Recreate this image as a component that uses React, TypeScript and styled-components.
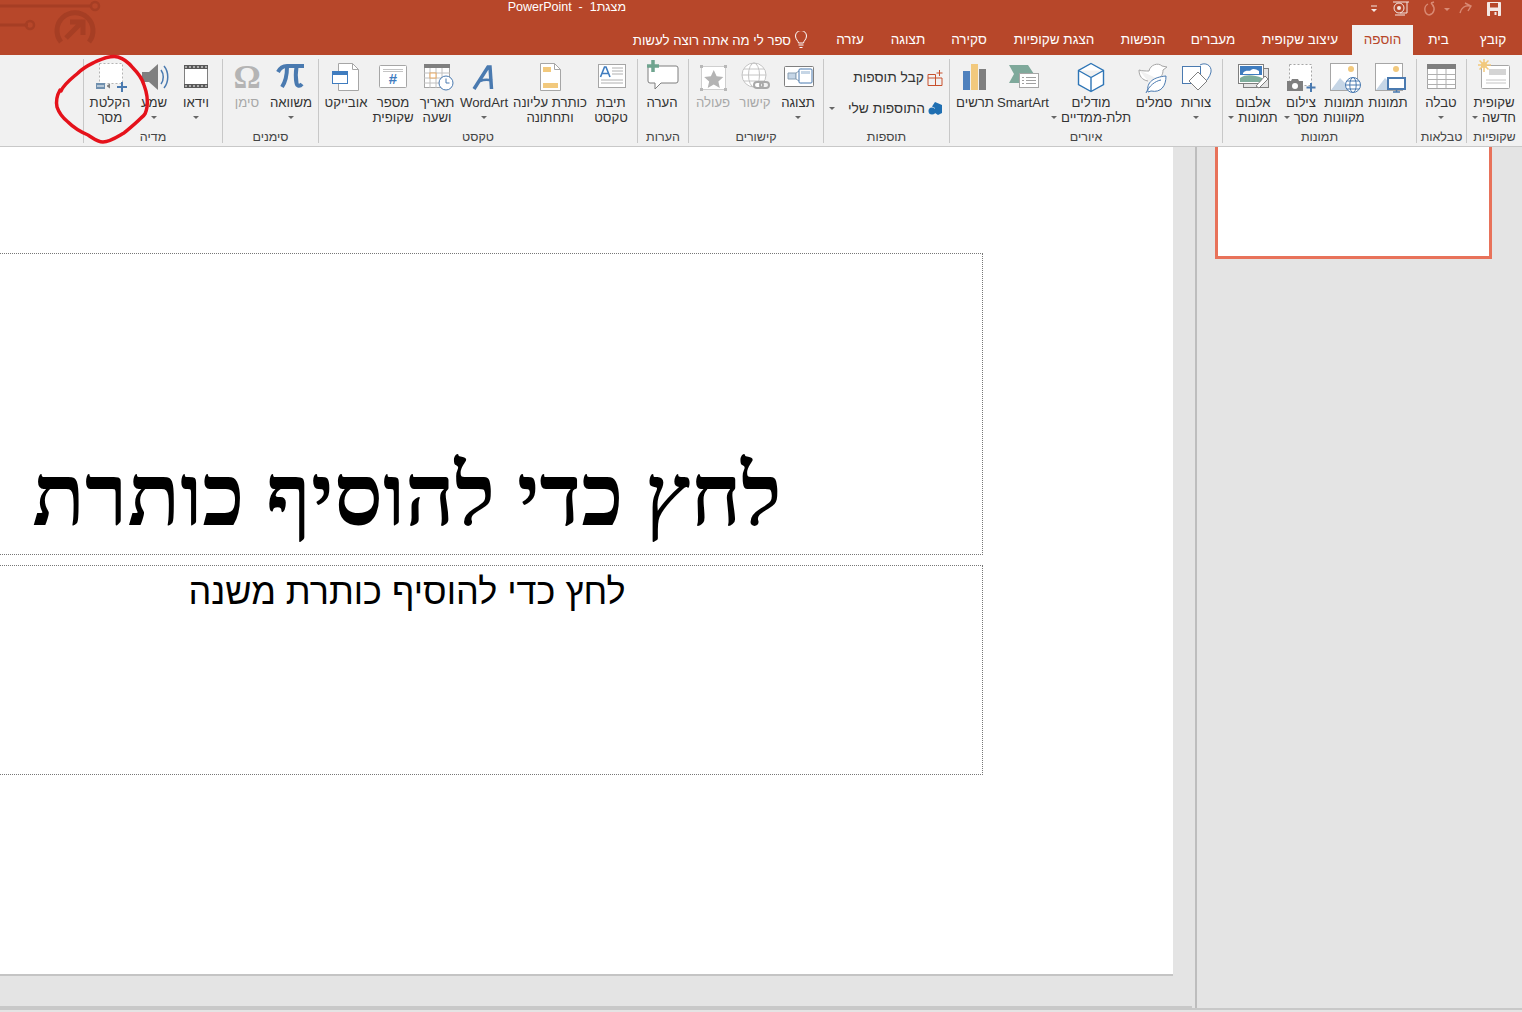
import React from 'react';
import styled, { createGlobalStyle } from 'styled-components';

const GlobalStyle = createGlobalStyle`
  html, body {
    margin: 0;
    padding: 0;
    overflow: hidden;
    background: #e4e4e4;
  }
  #root {
    width: 1522px;
    height: 1012px;
  }
`;

const BLUE = '#4a7ab0';
const GREY = '#a6a6a6';
const DARK = '#7f7f7f';
const YELLOW = '#f2c97d';
const LIGHT = '#c6d6e6';

type IconProps = { children: React.ReactNode };

const Ico = ({ children }: IconProps) => (
  <svg width="36" height="34" viewBox="0 0 36 34" fill="none">
    {children}
  </svg>
);

const NewSlideIcon = () => (
  <Ico>
    <rect x="5.5" y="6.5" width="28" height="23" rx="1" fill="#fff" stroke={GREY} />
    <rect x="13" y="10" width="17" height="6" fill="#d4d4d4" />
    <path d="M10 21h20M10 24h20" stroke="#c4c4c4" />
    <path d="M8 0v13M2 6h13M3.5 1.5l9 9M12.5 1.5l-9 9" stroke={YELLOW} strokeWidth="1.5" />
    <circle cx="8" cy="6" r="3" fill={YELLOW} />
  </Ico>
);

const TableIcon = () => (
  <Ico>
    <rect x="4.5" y="5.5" width="28" height="24" fill="#fff" stroke={GREY} />
    <rect x="4" y="5" width="29" height="5" fill={DARK} />
    <path d="M4 15.5h28M4 20.5h28M4 25.5h28M14 10v19M23 10v19" stroke="#b0b0b0" />
  </Ico>
);

const PicturesIcon = () => (
  <Ico>
    <rect x="5.5" y="4.5" width="27" height="27" fill="#fff" stroke={GREY} />
    <path d="M6 31l9-12 6 6 3-2 8 8z" fill={LIGHT} />
    <circle cx="26" cy="10" r="3" fill={YELLOW} />
    <rect x="18" y="19" width="17" height="11" fill="#fff" stroke={BLUE} strokeWidth="2" />
    <path d="M26.5 30v3M23 33h7" stroke={BLUE} strokeWidth="1.5" />
  </Ico>
);

const OnlinePicturesIcon = () => (
  <Ico>
    <rect x="4.5" y="4.5" width="27" height="27" fill="#fff" stroke={GREY} />
    <path d="M5 31l9-12 6 6 3-2 8 8z" fill={LIGHT} />
    <circle cx="25" cy="10" r="3" fill={YELLOW} />
    <circle cx="27" cy="26" r="7.5" fill="#fff" stroke={BLUE} />
    <ellipse cx="27" cy="26" rx="3.2" ry="7.5" stroke={BLUE} />
    <path d="M19.5 26h15M21 22h12M21 30h12" stroke={BLUE} />
  </Ico>
);

const ScreenshotIcon = () => (
  <Ico>
    <rect x="6.5" y="5.5" width="22" height="21" fill="#fff" stroke={GREY} strokeDasharray="2 2" />
    <path d="M4 22h4l1-2h6l1 2h4v10H4z" fill={DARK} />
    <circle cx="12" cy="27" r="3" fill="#fff" />
    <path d="M28 24v9M23.5 28.5h9" stroke={BLUE} strokeWidth="2" />
  </Ico>
);

const AlbumIcon = () => (
  <Ico>
    <rect x="8.5" y="9.5" width="25" height="19" fill="#e4e4e4" stroke={DARK} />
    <rect x="3.5" y="5.5" width="25" height="19" fill="#fff" stroke={DARK} />
    <rect x="5" y="7" width="22" height="9" fill="#3f7cbf" />
    <path d="M8 14c3-4 6-1 8-3s5-1 8 1v3H8z" fill="#fff" />
    <path d="M5 23v-4c6-4 14-3 22 0v4z" fill="#7fae9c" />
    <path d="M21 27l9-10 3 3-9 9z" fill="#fff" stroke={DARK} />
  </Ico>
);

const ShapesIcon = () => (
  <Ico>
    <path d="M22 6c5-3 12 0 11 7-1 5-5 9-8 13" stroke={BLUE} fill="#fff" />
    <rect x="4.5" y="7.5" width="18" height="17" fill="#fff" stroke={BLUE} />
    <path d="M20 16l9 9-9 9-9-9z" transform="translate(0 -3)" fill="#fff" stroke={DARK} />
  </Ico>
);

const IconsIcon = () => (
  <Ico>
    <path
      d="M3 11c3 1 7 1 10 1 1-6 9-9 13-5l5 1-4 3c0 5-2 7-5 9M3 11c0 6 3 10 9 11"
      stroke={GREY}
      fill="#fff"
    />
    <path d="M12 33c-2-10 6-15 18-16 0 10-5 17-15 15z" fill="#fff" stroke={BLUE} />
    <path d="M10 34c3-7 9-12 15-13" stroke={BLUE} />
  </Ico>
);

const ModelsIcon = () => (
  <Ico>
    <path
      d="M18 4.5l12.5 7v14l-12.5 7-12.5-7v-14zM5.5 11.5L18 18.5l12.5-7M18 18.5v14"
      stroke="#2e75b6"
      strokeWidth="1.4"
      fill="#fff"
    />
  </Ico>
);

const SmartArtIcon = () => (
  <Ico>
    <path d="M4 6h19l6 9-6 9H4l5-9z" fill="#7fa99b" />
    <rect x="14.5" y="14.5" width="19" height="14" fill="#fff" stroke={GREY} />
    <path d="M21 18.5h10M21 21.5h10M21 24.5h10M17 18.5h2M17 21.5h2M17 24.5h2" stroke="#a0a0a0" />
  </Ico>
);

const ChartIcon = () => (
  <Ico>
    <rect x="6" y="12" width="7" height="19" fill="#4f81bd" />
    <rect x="14" y="5" width="7" height="26" fill={YELLOW} />
    <rect x="22" y="10" width="7" height="21" fill={DARK} />
  </Ico>
);

const GetAddinsIcon = () => (
  <svg width="16" height="16" viewBox="0 0 16 16" fill="none">
    <path d="M1 4.500h7.500V8H15v7.500H1zM1 8h7.500v7.500" stroke="#c8502d" />
    <path d="M12.500 0v6M9.500 3h6" stroke="#c8502d" />
  </svg>
);

const MyAddinsIcon = () => (
  <svg width="15" height="15" viewBox="0 0 15 15">
    <path d="M7 1l7 3v8l-4 2-3-2V7L4 5.500z" fill="#1f6fb2" />
    <circle cx="4" cy="10" r="3.500" fill="#1f6fb2" />
  </svg>
);

const DisplayIcon = () => (
  <Ico>
    <rect x="4.500" y="7.500" width="29" height="20" rx="1" fill="#fff" stroke={DARK} />
    <path d="M8 14h8v6H8z" fill={LIGHT} stroke="#8aa0b4" />
    <path d="M16 14l6-4v14l-6-4z" fill="#fff" stroke="#8aa0b4" />
    <rect x="19" y="10" width="13" height="14" rx="1" fill="#fff" stroke={BLUE} />
    <rect x="21" y="12" width="9" height="3" fill={LIGHT} />
  </Ico>
);

const LinkIcon = () => (
  <Ico>
    <circle cx="17" cy="16" r="12" fill="#fff" stroke="#c4c4c4" />
    <ellipse cx="17" cy="16" rx="5.500" ry="12" stroke="#c4c4c4" />
    <path d="M5 16h24M7 10h20M7 22h20" stroke="#c4c4c4" />
    <rect x="17" y="23" width="9" height="6" rx="3" fill="#fff" stroke="#a9a9a9" strokeWidth="2" />
    <rect x="23" y="23" width="9" height="6" rx="3" stroke="#a9a9a9" strokeWidth="2" />
  </Ico>
);

const ActionIcon = () => (
  <Ico>
    <rect x="6.500" y="7.500" width="24" height="23" fill="#fff" stroke="#cfcfcf" />
    <path
      d="M18.500 10.500l3 6.500 7 .7-5.200 4.600 1.500 6.900-6.300-3.600-6.300 3.600 1.500-6.900-5.200-4.600 7-.7z"
      fill="#b4b4b4"
      transform="translate(1 1) scale(.96)"
    />
    <path d="M5 6h3v3H5zM29 6h3v3h-3zM5 29h3v3H5zM29 29h3v3h-3z" fill="#b8b8b8" />
  </Ico>
);

const CommentIcon = () => (
  <Ico>
    <path
      d="M6 7h26a2 2 0 0 1 2 2v13a2 2 0 0 1-2 2H17l-6 6v-6H6a2 2 0 0 1-2-2V9a2 2 0 0 1 2-2z"
      fill="#fff"
      stroke={DARK}
    />
    <path d="M9 1v12M3 7h12" stroke="#6fa48f" strokeWidth="3.500" />
  </Ico>
);

const TextBoxIcon = () => (
  <Ico>
    <rect x="5.500" y="5.500" width="27" height="23" fill="#fff" stroke={GREY} />
    <path d="M7.500 18l4-10h1.500l4 10M9 14.500h6" stroke="#3f7cbf" strokeWidth="1.600" />
    <path d="M19 9h11M19 12h11M19 15h11M8 21h22M8 24h22" stroke="#b0b0b0" />
  </Ico>
);

const HeaderFooterIcon = () => (
  <Ico>
    <path d="M8.500 4.500h14l6 6v21h-20z" fill="#fff" stroke={GREY} />
    <path d="M22.500 4.500v6h6" stroke={GREY} />
    <rect x="11" y="8" width="8" height="5" fill={YELLOW} />
    <rect x="11" y="24" width="15" height="5" fill={YELLOW} />
  </Ico>
);

const WordArtIcon = () => (
  <Ico>
    <path d="M8 30L22 8h2l1.500 22" stroke={BLUE} strokeWidth="3.500" />
    <path d="M14 22c4-1.500 8-1.500 12-.5" stroke={BLUE} strokeWidth="2.500" />
  </Ico>
);

const DateIcon = () => (
  <Ico>
    <rect x="5.500" y="5.500" width="25" height="23" fill="#fff" stroke={GREY} />
    <rect x="5" y="5" width="26" height="4" fill={DARK} />
    <path d="M5 14h26M5 19h26M5 24h26M11 9v20M17 9v20M23 9v20" stroke="#c0c0c0" />
    <rect x="11" y="14" width="6" height="5" fill="#fff" stroke="#e8a860" />
    <circle cx="27" cy="24" r="7" fill="#fff" stroke={BLUE} />
    <path d="M27 19.500V24h3.500" stroke={BLUE} />
  </Ico>
);

const HashText = styled.text`
  font-family: 'Liberation Sans', sans-serif;
  font-size: 15px;
  font-weight: 700;
  fill: #3f7cbf;
`;

const NumberIcon = () => (
  <Ico>
    <rect x="4.500" y="6.500" width="27" height="22" rx="1" fill="#fff" stroke={GREY} />
    <path d="M8 10.500h20M8 12.500h20" stroke="#c4c4c4" />
    <HashText x="18" y="25" textAnchor="middle">#</HashText>
  </Ico>
);

const ObjectIcon = () => (
  <Ico>
    <path d="M10.500 4.500h14l6 6v21h-20z" fill="#fff" stroke={GREY} />
    <path d="M24.500 4.500v6h6" stroke={GREY} />
    <rect x="4.500" y="12.500" width="15" height="12" fill="#fff" stroke="#3f7cbf" />
    <rect x="4" y="12" width="16" height="4" fill="#3f7cbf" />
  </Ico>
);

const OmegaGlyph = styled.span`
  display: block;
  height: 34px;
  font-family: 'Liberation Serif', serif;
  font-size: 34px;
  font-weight: 700;
  line-height: 36px;
  color: #b4b4b4;
`;

const EquationIcon = () => (
  <Ico>
    <path d="M5 13c2-4 5-6 9-6h17" stroke={BLUE} strokeWidth="4" />
    <path d="M14 8c0 8-1 14-5 20" stroke={BLUE} strokeWidth="4" />
    <path d="M23.500 8c-1 6-1 11 0 16 .5 3 3 4 5.500 1" stroke={BLUE} strokeWidth="4" />
  </Ico>
);

const SymbolIcon = () => <OmegaGlyph>Ω</OmegaGlyph>;

const VideoIcon = () => (
  <Ico>
    <rect x="6.500" y="6.500" width="23" height="22" fill="#fff" stroke={DARK} />
    <rect x="6" y="6" width="24" height="4" fill="#595959" />
    <rect x="6" y="25" width="24" height="4" fill="#595959" />
    <path d="M7 8h22M7 27h22" stroke="#fff" strokeDasharray="2 2" />
  </Ico>
);

const AudioIcon = () => (
  <Ico>
    <path d="M6 13h7l9-8v26l-9-8H6z" fill={DARK} />
    <path d="M25 11c3 4 3 10 0 14M28 7c5 6 5 16 0 22" stroke={BLUE} strokeWidth="1.500" />
  </Ico>
);

const RecordIcon = () => (
  <Ico>
    <rect x="7.500" y="4.500" width="23" height="20" fill="#fff" stroke="#b4b4b4" strokeDasharray="2 2" />
    <path d="M4 24h9v6H4z" fill="#6f8fae" />
    <path d="M5 27h7" stroke="#fff" />
    <path d="M15 26.500l3-2v5l-3-2z" fill={DARK} />
    <path d="M25 28h10M30 23v10" stroke={BLUE} strokeWidth="2" />
  </Ico>
);

type Item = {
  label: string[];
  width: number;
  icon: React.ReactNode;
  drop?: 'below' | 'inline';
  off?: boolean;
};

type Group = {
  title: string;
  width: number;
  inset: number;
  items?: Item[];
};

const groups: Group[] = [
  {
    title: 'שקופיות',
    width: 56,
    inset: 0,
    items: [{ label: ['שקופית', 'חדשה'], width: 56, icon: <NewSlideIcon />, drop: 'inline' }],
  },
  {
    title: 'טבלאות',
    width: 50,
    inset: 0,
    items: [{ label: ['טבלה'], width: 50, icon: <TableIcon />, drop: 'below' }],
  },
  {
    title: 'תמונות',
    width: 194,
    inset: 6,
    items: [
      { label: ['תמונות'], width: 44, icon: <PicturesIcon /> },
      { label: ['תמונות', 'מקוונות'], width: 44, icon: <OnlinePicturesIcon /> },
      { label: ['צילום', 'מסך'], width: 42, icon: <ScreenshotIcon />, drop: 'inline' },
      { label: ['אלבום', 'תמונות'], width: 54, icon: <AlbumIcon />, drop: 'inline' },
    ],
  },
  {
    title: 'איורים',
    width: 273,
    inset: 6,
    items: [
      { label: ['צורות'], width: 40, icon: <ShapesIcon />, drop: 'below' },
      { label: ['סמלים'], width: 44, icon: <IconsIcon /> },
      { label: ['מודלים', 'תלת-ממדיים'], width: 82, icon: <ModelsIcon />, drop: 'inline' },
      { label: ['SmartArt'], width: 54, icon: <SmartArtIcon /> },
      { label: ['תרשים'], width: 42, icon: <ChartIcon /> },
    ],
  },
  { title: 'תוספות', width: 126, inset: 6 },
  {
    title: 'קישורים',
    width: 135,
    inset: 3,
    items: [
      { label: ['תצוגה'], width: 44, icon: <DisplayIcon />, drop: 'below' },
      { label: ['קישור'], width: 42, icon: <LinkIcon />, off: true },
      { label: ['פעולה'], width: 42, icon: <ActionIcon />, off: true },
    ],
  },
  {
    title: 'הערות',
    width: 51,
    inset: 4,
    items: [{ label: ['הערה'], width: 44, icon: <CommentIcon /> }],
  },
  {
    title: 'טקסט',
    width: 319,
    inset: 5,
    items: [
      { label: ['תיבת', 'טקסט'], width: 42, icon: <TextBoxIcon /> },
      { label: ['כותרת עליונה', 'ותחתונה'], width: 80, icon: <HeaderFooterIcon /> },
      { label: ['WordArt'], width: 52, icon: <WordArtIcon />, drop: 'below' },
      { label: ['תאריך', 'ושעה'], width: 42, icon: <DateIcon /> },
      { label: ['מספר', 'שקופית'], width: 46, icon: <NumberIcon /> },
      { label: ['אובייקט'], width: 48, icon: <ObjectIcon /> },
    ],
  },
  {
    title: 'סימנים',
    width: 96,
    inset: 4,
    items: [
      { label: ['משוואה'], width: 46, icon: <EquationIcon />, drop: 'below' },
      { label: ['סימן'], width: 42, icon: <SymbolIcon />, off: true },
    ],
  },
  {
    title: 'מדיה',
    width: 139,
    inset: 4,
    items: [
      { label: ['וידאו'], width: 44, icon: <VideoIcon />, drop: 'below' },
      { label: ['שמע'], width: 40, icon: <AudioIcon />, drop: 'below' },
      { label: ['הקלטת', 'מסך'], width: 48, icon: <RecordIcon /> },
    ],
  },
];

const tabs: { name: string; width: number; active?: boolean }[] = [
  { name: 'קובץ', width: 58 },
  { name: 'בית', width: 51 },
  { name: 'הוספה', width: 61, active: true },
  { name: 'עיצוב שקופית', width: 104 },
  { name: 'מעברים', width: 70 },
  { name: 'הנפשות', width: 70 },
  { name: 'הצגת שקופיות', width: 108 },
  { name: 'סקירה', width: 62 },
  { name: 'תצוגה', width: 60 },
  { name: 'עזרה', width: 56 },
];

export default function App() {
  return (
    <Page dir="rtl">
      <GlobalStyle />
      <Header>
        <Watermark width="110" height="55" viewBox="0 0 110 55" fill="none">
          <path d="M0 6h92M0 25h28" stroke="#a63e24" strokeWidth="3" />
          <circle cx="95" cy="6" r="4" stroke="#a63e24" strokeWidth="2.500" />
          <circle cx="30" cy="25" r="4" stroke="#a63e24" strokeWidth="2.500" />
          <path d="M61 42a18 18 0 1 1 28 0" stroke="#a63e24" strokeWidth="5" />
          <path d="M66 38l17-17M70 22h13v13" stroke="#a63e24" strokeWidth="5" />
        </Watermark>
        <TitleRow>
          <QuickAccess>
            <svg width="16" height="16" viewBox="0 0 16 16" fill="none">
              <path d="M1.500 1.500h13v13h-13z" fill="#f4e8e4" stroke="#f4e8e4" />
              <rect x="4" y="2" width="8" height="4.500" fill="#b7472a" />
              <rect x="4" y="10" width="8" height="5" fill="#b7472a" />
              <rect x="8.500" y="11" width="2" height="3" fill="#f4e8e4" />
            </svg>
            <FadedGlyphs width="52" height="16" viewBox="0 0 52 16" fill="none">
              <path d="M7 14a6 6 0 0 1-1-11M9 2l2.500 3M9 2l3-1" stroke="#d98a74" strokeWidth="1.400" />
              <path d="M7 14a6 6 0 0 0 3.500-10" stroke="#d98a74" strokeWidth="1.400" />
              <path d="M22 7l3 3 3-3z" fill="#d98a74" />
              <path d="M38 12c1-5 5-8 10-7M43 2l6 3-3 5" stroke="#d98a74" strokeWidth="1.400" />
            </FadedGlyphs>
            <svg width="18" height="18" viewBox="0 0 18 18" fill="none">
              <path d="M1 2h16M15 2v11H8" stroke="#f4e8e4" />
              <circle cx="7" cy="8" r="5" stroke="#f4e8e4" />
              <circle cx="7" cy="8" r="2" fill="#f4e8e4" />
              <path d="M3 15h10" stroke="#f4e8e4" />
            </svg>
            <QatCaret width="8" height="10" viewBox="0 0 8 10">
              <path d="M1 2h6" stroke="#f4e8e4" />
              <path d="M1 5h6L4 8z" fill="#f4e8e4" />
            </QatCaret>
          </QuickAccess>
          <DocTitle>מצגת1&nbsp; -&nbsp; PowerPoint</DocTitle>
        </TitleRow>
        <TabRow>
          {tabs.map((t) => (
            <Tab key={t.name} $width={t.width} $active={t.active}>
              {t.name}
            </Tab>
          ))}
          <TellMe>
            <svg width="14" height="18" viewBox="0 0 14 18" fill="none">
              <path d="M4.500 12c0-2-3-3.500-3-7a5.500 5.500 0 0 1 11 0c0 3.500-3 5-3 7z" stroke="#fff" />
              <path d="M4.500 14h5M5.500 16.500h3" stroke="#fff" />
            </svg>
            ספר לי מה אתה רוצה לעשות
          </TellMe>
        </TabRow>
      </Header>
      <Ribbon>
        {groups.map((g) => (
          <RibbonGroup key={g.title} $width={g.width}>
            <GroupBody $inset={g.inset}>
              {g.items ? (
                g.items.map((item) => (
                  <RibbonButton key={item.label.join(' ')} $width={item.width} $off={item.off}>
                    <IconSlot>{item.icon}</IconSlot>
                    {item.label.map((line, i) => (
                      <ButtonLine key={line}>
                        {line}
                        {item.drop === 'inline' && i === item.label.length - 1 && <Caret $inline />}
                      </ButtonLine>
                    ))}
                    {item.drop === 'below' && (
                      <ButtonLine>
                        <Caret />
                      </ButtonLine>
                    )}
                  </RibbonButton>
                ))
              ) : (
                <AddinList>
                  <AddinRow>
                    <GetAddinsIcon />
                    קבל תוספות
                  </AddinRow>
                  <AddinRow>
                    <MyAddinsIcon />
                    התוספות שלי
                    <Caret $inline $gap={10} />
                  </AddinRow>
                </AddinList>
              )}
            </GroupBody>
            <GroupTitle>{g.title}</GroupTitle>
          </RibbonGroup>
        ))}
        <Annotation width="110" height="100" viewBox="50 50 110 100" fill="none">
          <path
            d="M61 91C64 84 71 79 78 73C84 67 89 65 95 62C102 59 110 55 118 57C125 59 129 63 133 68C138 73 142 78 144 85C147 93 148 100 147 107C146 113 145 115 141 118C135 124 130 128 124 133C117 137 110 142 103 142C97 142 93 138 88 135C81 132 74 128 68 122C63 118 59 113 57 107C56 102 56 97 60 90"
            stroke="#e5121b"
            strokeWidth="3.500"
            strokeLinecap="round"
          />
        </Annotation>
      </Ribbon>
      <Workspace>
        <ThumbPane>
          <Thumb />
        </ThumbPane>
        <EditPane>
          <SlideView>
            <Slide>
              <TitleBox>לחץ כדי להוסיף כותרת</TitleBox>
              <SubtitleBox>לחץ כדי להוסיף כותרת משנה</SubtitleBox>
            </Slide>
          </SlideView>
          <NotesEdge />
        </EditPane>
      </Workspace>
    </Page>
  );
}

const Page = styled.div`
  width: 1522px;
  height: 1012px;
  display: flex;
  flex-direction: column;
  overflow: hidden;
  font-family: 'Liberation Sans', Arial, sans-serif;
  background: #e4e4e4;
`;

const Header = styled.header`
  position: relative;
  height: 55px;
  flex: none;
  background: #b7472a;
`;

const Watermark = styled.svg`
  position: absolute;
  left: 0;
  top: 0;
`;

const TitleRow = styled.div`
  position: relative;
  height: 25px;
  display: flex;
  align-items: center;
`;

const QuickAccess = styled.div`
  width: 156px;
  padding-right: 20px;
  display: flex;
  align-items: center;
  gap: 12px;
  box-sizing: border-box;
  flex: none;
  margin-top: -8px;
`;

const FadedGlyphs = styled.svg`
  flex: none;
`;

const QatCaret = styled.svg`
  flex: none;
  margin-right: 2px;
`;

const DocTitle = styled.div`
  margin-right: 740px;
  margin-top: -11px;
  font-size: 12.500px;
  color: #fff;
  white-space: nowrap;
`;

const TabRow = styled.nav`
  height: 30px;
  display: flex;
`;

const Tab = styled.div<{ $width: number; $active?: boolean }>`
  width: ${(p) => p.$width}px;
  flex: none;
  display: flex;
  align-items: center;
  justify-content: center;
  padding-bottom: 1px;
  box-sizing: border-box;
  font-size: 13.500px;
  color: ${(p) => (p.$active ? '#b7472a' : '#fff')};
  background: ${(p) => (p.$active ? '#f1f1f1' : 'transparent')};
`;

const TellMe = styled.div`
  margin-right: 14px;
  display: flex;
  align-items: center;
  gap: 3px;
  font-size: 13.200px;
  color: #fff;
  white-space: nowrap;
`;

const Ribbon = styled.section`
  position: relative;
  height: 92px;
  flex: none;
  display: flex;
  background: #f1f1f1;
  border-bottom: 1px solid #c8c8c8;
  box-sizing: border-box;
`;

const RibbonGroup = styled.div<{ $width: number }>`
  width: ${(p) => p.$width}px;
  flex: none;
  margin-top: 4px;
  height: 84px;
  box-sizing: border-box;
  border-left: 1px solid #c8c8c8;
  display: flex;
  flex-direction: column;
`;

const GroupBody = styled.div<{ $inset: number }>`
  flex: 1;
  min-height: 0;
  display: flex;
  padding-right: ${(p) => p.$inset}px;
`;

const GroupTitle = styled.div`
  height: 15px;
  margin-bottom: -2px;
  font-size: 12.500px;
  line-height: 15px;
  text-align: center;
  color: #444;
`;

const RibbonButton = styled.div<{ $width: number; $off?: boolean }>`
  width: ${(p) => p.$width}px;
  flex: none;
  display: flex;
  flex-direction: column;
  align-items: center;
  color: ${(p) => (p.$off ? '#a8a8a8' : '#333')};
`;

const IconSlot = styled.div`
  height: 36px;
  display: flex;
  align-items: flex-start;
  justify-content: center;
  flex: none;
`;

const ButtonLine = styled.div`
  height: 15px;
  font-size: 13.200px;
  line-height: 15px;
  white-space: nowrap;
  display: flex;
  align-items: center;
  justify-content: center;
`;

const Caret = styled.span<{ $inline?: boolean; $gap?: number }>`
  width: 0;
  height: 0;
  margin-right: ${(p) => (p.$gap ? p.$gap : p.$inline ? 4 : 0)}px;
  border-left: 3px solid transparent;
  border-right: 3px solid transparent;
  border-top: 3px solid #666;
`;

const AddinList = styled.div`
  display: flex;
  flex-direction: column;
  gap: 10px;
  padding-top: 8px;
`;

const AddinRow = styled.div`
  height: 21px;
  display: flex;
  align-items: center;
  gap: 3px;
  font-size: 13.800px;
  color: #333;
  white-space: nowrap;
`;

const Annotation = styled.svg`
  position: absolute;
  left: 50px;
  top: -5px;
  pointer-events: none;
`;

const Workspace = styled.main`
  flex: 1;
  display: flex;
  min-height: 0;
  border-bottom: 2px solid #c8c8c8;
  margin-bottom: 2px;
`;

const ThumbPane = styled.aside`
  width: 327px;
  flex: none;
  box-sizing: border-box;
  padding-right: 30px;
  border-left: 2px solid #bdbdbd;
`;

const Thumb = styled.div`
  width: 277px;
  height: 112px;
  box-sizing: border-box;
  background: #fff;
  border: 3px solid #e8725a;
  border-top: none;
`;

const EditPane = styled.div`
  flex: 1;
  min-width: 0;
  display: flex;
  flex-direction: column;
  padding-right: 3px;
`;

const SlideView = styled.div`
  flex: 1;
  min-height: 0;
  padding-right: 19px;
  padding-bottom: 30px;
  overflow: hidden;
`;

const Slide = styled.div`
  height: 100%;
  box-sizing: border-box;
  width: 1175px;
  background: #fff;
  border-left: 2px solid #c4c4c4;
  border-bottom: 2px solid #c4c4c4;
  padding-top: 106px;
`;

const TitleBox = styled.div`
  height: 302px;
  width: 1152px;
  margin-right: 190px;
  box-sizing: border-box;
  border: 1px dotted #777;
  display: flex;
  align-items: flex-end;
  justify-content: center;
  font-family: 'Liberation Serif', serif;
  font-size: 86.500px;
  font-weight: 700;
  line-height: 100px;
  color: #000;
  white-space: nowrap;
  padding-bottom: 8px;
`;

const SubtitleBox = styled.div`
  height: 210px;
  width: 1152px;
  margin-top: 10px;
  margin-right: 190px;
  box-sizing: border-box;
  border: 1px dotted #777;
  text-align: center;
  font-family: 'Liberation Sans', sans-serif;
  font-size: 36px;
  line-height: 52px;
  color: #000;
  white-space: nowrap;
`;

const NotesEdge = styled.div`
  height: 2px;
  flex: none;
  background: #c8c8c8;
`;
